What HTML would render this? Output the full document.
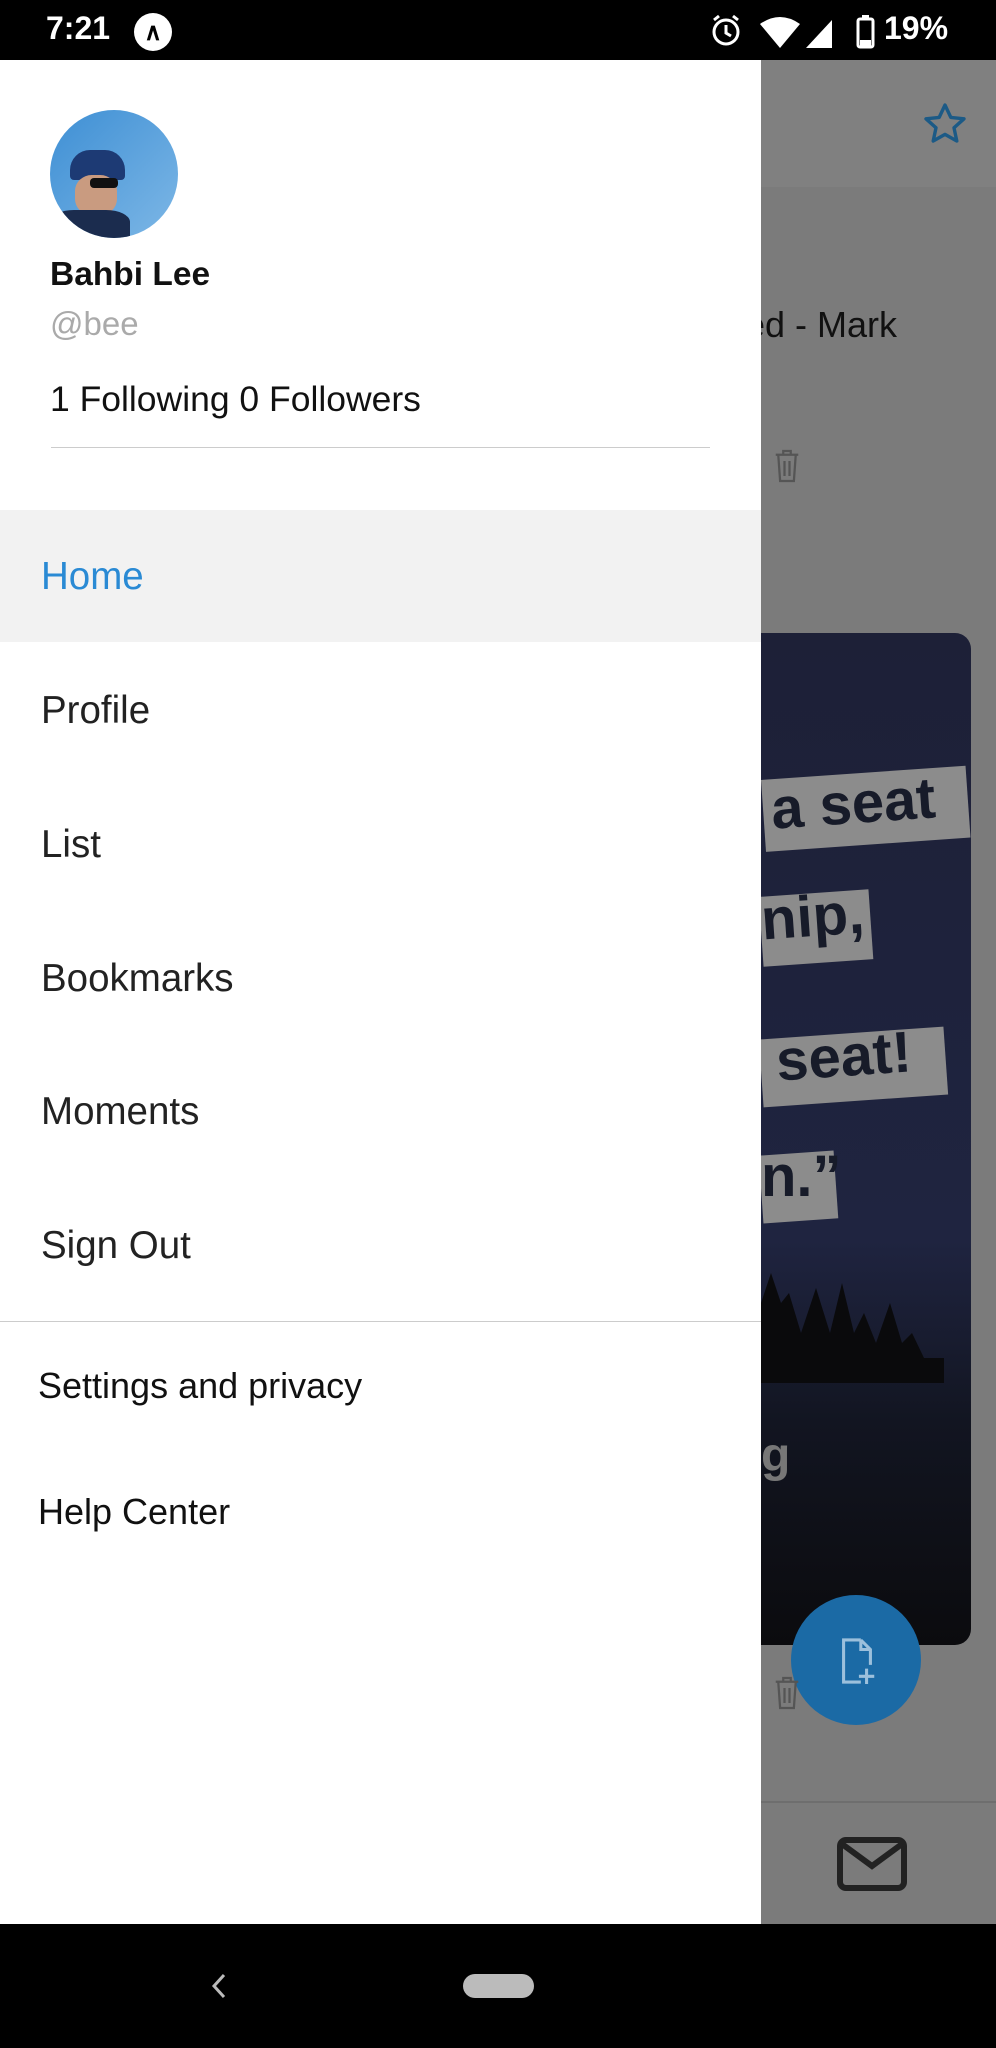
<!DOCTYPE html>
<html><head><meta charset="utf-8"><style>
*{margin:0;padding:0;box-sizing:border-box}
body{width:996px;height:2048px;position:relative;overflow:hidden;background:#7b7b7b;font-family:"Liberation Sans",Roboto,sans-serif}
.abs{position:absolute}
.status{left:0;top:0;width:996px;height:60px;background:#000;color:#fff}
.drawer{left:0;top:60px;width:761px;height:1864px;background:#fff}
.nav{left:0;top:1924px;width:996px;height:124px;background:#000}
.item{position:absolute;left:41px;font-size:38.5px;color:#222}
.sm{position:absolute;left:38px;font-size:36px;color:#111}
</style></head><body>
<div class="abs status">
 <div class="abs" style="left:46px;top:10px;font-size:32px;font-weight:bold">7:21</div>
 <div class="abs" style="left:134px;top:13px;width:38px;height:38px;border-radius:50%;background:#fff;color:#000;font-size:24px;font-weight:bold;text-align:center;line-height:40px">∧</div>
 <svg class="abs" style="left:708px;top:12px" width="240" height="40" viewBox="0 0 240 40">
  <circle cx="18" cy="20" r="12" fill="none" stroke="#fff" stroke-width="3"/><path d="M18 13v8l5 3" stroke="#fff" stroke-width="3" fill="none"/><path d="M6 8l5-4M30 8l-5-4" stroke="#fff" stroke-width="3"/>
  <path d="M52 12q20-14 40 0l-20 24z" fill="#fff"/>
  <path d="M98 36l26-28v28z" fill="#fff"/>
  <rect x="150" y="7" width="15" height="28" rx="2" fill="none" stroke="#fff" stroke-width="3"/><rect x="154" y="3" width="7" height="4" fill="#fff"/><rect x="152" y="28" width="11" height="6" fill="#fff"/>
 </svg>
 <div class="abs" style="left:884px;top:10px;font-size:32px;font-weight:bold">19%</div>
</div>
<div class="abs" style="left:761px;top:60px;width:235px;height:127px;background:#808080"></div>
<svg class="abs" style="left:921px;top:100px" width="48" height="48" viewBox="0 0 24 24"><path d="M12 2.5l2.9 6.2 6.6.7-5 4.5 1.4 6.6L12 17.2l-5.9 3.3 1.4-6.6-5-4.5 6.6-.7z" fill="none" stroke="#1c5a86" stroke-width="1.7" stroke-linejoin="round"/></svg>
<div class="abs" style="left:745px;top:304px;font-size:36px;color:#111">ed - Mark</div>
<svg class="abs" style="left:772px;top:447px" width="30" height="38" viewBox="0 0 24 30"><path d="M3 6h18M9 6V3h6v3M5 6l1.5 21h11L19 6M10 11v12M14 11v12" fill="none" stroke="#555" stroke-width="1.8"/></svg>
<div class="abs" style="left:761px;top:633px;width:210px;height:1012px;border-radius:0 16px 16px 0;background:linear-gradient(#1d2037 0%,#1f2440 60%,#121521 78%,#0b0b0e 100%);overflow:hidden">
 <div class="abs" style="left:0;top:147px;width:205px;height:72px;background:#8c8c8c;transform:rotate(-4deg);transform-origin:left top"></div>
 <div class="abs" style="left:10px;top:137px;font-size:58px;font-weight:900;color:#171b29;transform:rotate(-4deg)">a seat</div>
 <div class="abs" style="left:0;top:260px;width:110px;height:70px;background:#8c8c8c;transform:rotate(-4deg)"></div>
 <div class="abs" style="left:0;top:250px;font-size:58px;font-weight:900;color:#171b29;transform:rotate(-4deg)">nip,</div>
 <div class="abs" style="left:0;top:400px;width:185px;height:68px;background:#8c8c8c;transform:rotate(-4deg)"></div>
 <div class="abs" style="left:15px;top:390px;font-size:58px;font-weight:900;color:#171b29;transform:rotate(-4deg)">seat!</div>
 <div class="abs" style="left:0;top:520px;width:75px;height:68px;background:#8c8c8c;transform:rotate(-4deg)"></div>
 <div class="abs" style="left:0;top:510px;font-size:58px;font-weight:900;color:#171b29">n.”</div>
 <svg class="abs" style="left:0;top:630px" width="210" height="120"><path d="M0 120V40l10-30 10 30 8-10 12 40 15-45 14 45 12-50 12 50 10-20 12 30 14-40 12 40 10-10 12 25 20 0V120z" fill="#0a0a0c"/></svg>
 <div class="abs" style="left:0;top:795px;font-size:48px;font-weight:900;color:#777">g</div>
</div>
<div class="abs" style="left:791px;top:1595px;width:130px;height:130px;border-radius:50%;background:#1b6aa5"></div>
<svg class="abs" style="left:834px;top:1636px" width="46" height="50" viewBox="0 0 24 26"><path d="M14 2H5v22h9M14 2l5 5v8M14 2v5h5M17 17v8M13 21h8" fill="none" stroke="#9cc0dc" stroke-width="1.6"/></svg>
<svg class="abs" style="left:772px;top:1674px" width="30" height="38" viewBox="0 0 24 30"><path d="M3 6h18M9 6V3h6v3M5 6l1.5 21h11L19 6M10 11v12M14 11v12" fill="none" stroke="#555" stroke-width="1.8"/></svg>
<div class="abs" style="left:761px;top:1801px;width:235px;height:2px;background:#6e6e6e"></div>
<svg class="abs" style="left:836px;top:1836px" width="72" height="56" viewBox="0 0 36 28"><rect x="2" y="2" width="32" height="24" rx="3" fill="none" stroke="#222" stroke-width="3"/><path d="M3 4l15 11 15-11" fill="none" stroke="#222" stroke-width="3"/></svg>

<div class="abs drawer">
 <div class="abs" style="left:50px;top:50px;width:128px;height:128px;border-radius:50%;background:linear-gradient(135deg,#3e8fd4,#7db7e6);overflow:hidden">
  <div class="abs" style="left:20px;top:40px;width:55px;height:30px;border-radius:20px 20px 4px 4px;background:#1d3a74"></div>
  <div class="abs" style="left:25px;top:65px;width:42px;height:40px;border-radius:40%;background:#c99b80"></div>
  <div class="abs" style="left:40px;top:68px;width:28px;height:10px;background:#111;border-radius:4px"></div>
  <div class="abs" style="left:0;top:100px;width:80px;height:40px;background:#1b2c4e;border-radius:30% 30% 0 0"></div>
 </div>
 <div class="abs" style="left:50px;top:196px;font-size:33.5px;font-weight:bold;color:#111">Bahbi Lee</div>
 <div class="abs" style="left:50px;top:245px;font-size:33px;color:#aaa">@bee</div>
 <div class="abs" style="left:50px;top:319px;font-size:35.5px;color:#111">1 Following 0 Followers</div>
 <div class="abs" style="left:51px;top:387px;width:659px;height:1px;background:#ccc"></div>
 <div class="abs" style="left:0;top:450px;width:761px;height:132px;background:#f2f2f2"></div>
 <div class="item" style="top:495px;color:#2a8ad4">Home</div>
 <div class="item" style="top:629px">Profile</div>
 <div class="item" style="top:763px">List</div>
 <div class="item" style="top:897px">Bookmarks</div>
 <div class="item" style="top:1030px">Moments</div>
 <div class="item" style="top:1164px">Sign Out</div>
 <div class="abs" style="left:0;top:1261px;width:761px;height:1px;background:#ccc"></div>
 <div class="sm" style="top:1305px">Settings and privacy</div>
 <div class="sm" style="top:1431px">Help Center</div>
</div>
<div class="abs nav">
 <svg class="abs" style="left:208px;top:48px" width="24" height="28" viewBox="0 0 24 28"><path d="M16 3L6 14l10 11" fill="none" stroke="#bbb" stroke-width="3"/></svg>
 <div class="abs" style="left:463px;top:50px;width:71px;height:24px;border-radius:12px;background:#bbb"></div>
</div>
</body></html>
